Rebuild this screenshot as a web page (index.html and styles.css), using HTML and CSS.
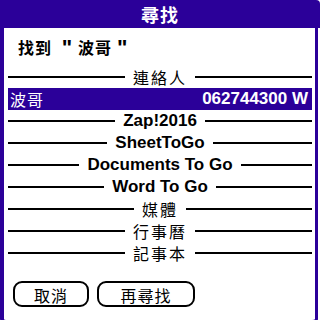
FILE: index.html
```html
<!DOCTYPE html>
<html lang="zh-Hant">
<head>
  <meta charset="UTF-8">
  <title>尋找</title>
  <link rel="stylesheet" href="styles.css">
</head>
<body>
  <div class="dialog">
    <div class="title">尋找</div>
    <div class="body">
      <div class="found">找到 <span class="q">"</span>波哥<span class="q">"</span></div>
      <div class="results">
        <div class="sep cjk"><span>連絡人</span></div>
        <div class="hit"><span class="name">波哥</span><span class="num">062744300 W</span></div>
        <div class="sep"><span>Zap!2016</span></div>
        <div class="sep"><span>SheetToGo</span></div>
        <div class="sep"><span>Documents To Go</span></div>
        <div class="sep"><span>Word To Go</span></div>
        <div class="sep cjk"><span>媒體</span></div>
        <div class="sep cjk"><span>行事曆</span></div>
        <div class="sep cjk"><span>記事本</span></div>
      </div>
      <div class="buttons">
        <button class="btn btn-cancel">取消</button>
        <button class="btn btn-again">再尋找</button>
      </div>
    </div>
  </div>
</body>
</html>
```

FILE: styles.css
```css
html, body { margin: 0; padding: 0; background: #fff; }
body {
  font-family: "Liberation Sans", "Noto Sans CJK TC", sans-serif;
  color: #000;
}
.dialog { width: 318px; }
.title {
  height: 28px; line-height: 28px;
  margin-right: -2px;
  background: #2b0099; color: #fff;
  border-top-right-radius: 4px;
  text-align: center;
  font-family: "Noto Sans CJK TC", sans-serif;
  font-weight: bold; font-size: 18px;
  letter-spacing: 1px;
}
.body {
  border: solid #2b0099;
  border-width: 0 3px 5px 4px;
  border-radius: 0 0 6px 6px;
  padding: 8px 3px 7px 4px;
  height: 277px;
}
.found {
  height: 22px; line-height: 22px;
  padding-left: 10px;
  font-family: "Noto Sans CJK TC", sans-serif;
  font-weight: bold; font-size: 16px;
  letter-spacing: 1px;
  white-space: pre;
}
.found .q {
  font-family: "Liberation Sans", sans-serif; font-weight: 900;
  font-size: 22px; padding: 0 5px;
  vertical-align: -1px;
}
.results { margin-top: 8px; }
.sep {
  display: flex; align-items: center; gap: 8px;
  height: 22px;
  font-weight: bold; font-size: 17px;
}
.sep::before, .sep::after {
  content: ""; flex: 1;
  height: 2px; background: #000;
}
.sep.cjk {
  font-family: "Noto Sans CJK TC", sans-serif;
  font-weight: normal; font-size: 16px; letter-spacing: 2px;
}
.hit {
  display: flex; justify-content: space-between; align-items: center;
  height: 22px; padding: 0 4px 0 2px;
  background: #2b0099; color: #fff;
  font-size: 17px;
}
.hit .name { font-family: "Noto Sans CJK TC", sans-serif; font-size: 16px; letter-spacing: 1px; }
.hit .num { font-weight: bold; }
.buttons { display: flex; gap: 8px; margin-top: 17px; padding-left: 5px; }
.btn {
  height: 26px;
  background: #fff; color: #000;
  border: 2px solid #000; border-radius: 9px;
  font-family: "Noto Sans CJK TC", sans-serif; font-size: 16px;
  letter-spacing: 1px;
  padding: 0;
}
.btn-cancel { width: 76px; }
.btn-again { width: 98px; }
```
